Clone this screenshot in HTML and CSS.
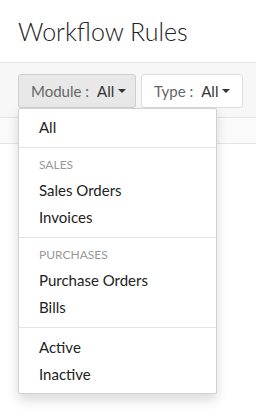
FILE: index.html
```html
<!doctype html>
<html lang="en">
<head>
  <meta charset="UTF-8">
  <title>Workflow Rules</title>
  <meta name="viewport" content="width=device-width, initial-scale=1.0">
  <link rel="stylesheet" href="styles.css">
</head>
<body>

  <div class="page-header">
    <h1>Workflow Rules</h1>
  </div>

  <div class="toolbar">
    <div class="filter">
      <button class="filter-btn open">
        <span class="label">Module :</span><span class="value">All</span><span class="caret"></span>
      </button>

      <ul class="dropdown">
        <li class="item">All</li>
        <li class="divider"></li>
        <li class="group">Sales</li>
        <li class="item">Sales Orders</li>
        <li class="item">Invoices</li>
        <li class="divider"></li>
        <li class="group">Purchases</li>
        <li class="item">Purchase Orders</li>
        <li class="item">Bills</li>
        <li class="divider"></li>
        <li class="item">Active</li>
        <li class="item">Inactive</li>
      </ul>
    </div>

    <button class="filter-btn">
      <span class="label">Type :</span><span class="value">All</span><span class="caret"></span>
    </button>
  </div>

  <div class="table-head"></div>

</body>
</html>
```

FILE: styles.css
```css
body {
  margin: 0;
  min-height: 417px;
  font-family: 'Lato', 'Open Sans', sans-serif;
  color: #333;
  background: #fff;
}

.page-header {
  height: 62px;
  padding: 0 18px;
  box-sizing: border-box;
  display: flex;
  align-items: center;
}
.page-header h1 {
  margin: 0;
  font-size: 25px;
  font-weight: 300;
  color: #222;
  line-height: 1;
  padding-top: 1px;
}

.toolbar {
  background: #f7f7f7;
  border-top: 1px solid #e6e6e6;
  border-bottom: 1px solid #e4e4e4;
  height: 54px;
  padding: 0 18px;
  display: flex;
  align-items: flex-start;
  gap: 5px;
}

.filter {
  position: relative;
}

.filter-btn {
  margin-top: 11px;
  height: 34px;
  box-sizing: border-box;
  border: 1px solid #dcdcdc;
  border-radius: 3px;
  background: #fff;
  font-family: inherit;
  font-size: 15px;
  color: #333;
  padding: 0 12px;
  display: flex;
  align-items: center;
  white-space: nowrap;
  cursor: pointer;
}
.filter-btn.open {
  background: #e8e8e8;
  border-color: #cfcfcf;
  width: 118px;
}
.filter-btn .label {
  color: #666;
}
.filter-btn .value {
  color: #333;
  margin-left: 8px;
}
.caret {
  display: inline-block;
  width: 0;
  height: 0;
  margin-left: 4px;
  border-left: 4px solid transparent;
  border-right: 4px solid transparent;
  border-top: 4px solid #333;
}

.dropdown {
  position: absolute;
  top: 45px;
  left: 0;
  width: 199px;
  box-sizing: border-box;
  margin: 0;
  padding: 5px 0;
  list-style: none;
  background: #fff;
  border: 1px solid rgba(0,0,0,0.18);
  border-radius: 2px;
  box-shadow: 0 6px 12px rgba(0,0,0,0.15);
  z-index: 10;
  font-size: 15px;
}
.dropdown li {
  overflow: hidden;
}
.dropdown .item {
  height: 27px;
  line-height: 27px;
  padding-left: 20px;
  color: #222;
}
.dropdown .group {
  height: 18px;
  padding: 2px 0 3px 20px;
  line-height: 18px;
  font-size: 12px;
  text-transform: uppercase;
  color: #999;
}
.dropdown .divider {
  height: 1px;
  margin: 6px 0;
  background: #e5e5e5;
}

.table-head {
  height: 25px;
  background: #fafafa;
  border-bottom: 1px solid #e5e5e5;
}
```
